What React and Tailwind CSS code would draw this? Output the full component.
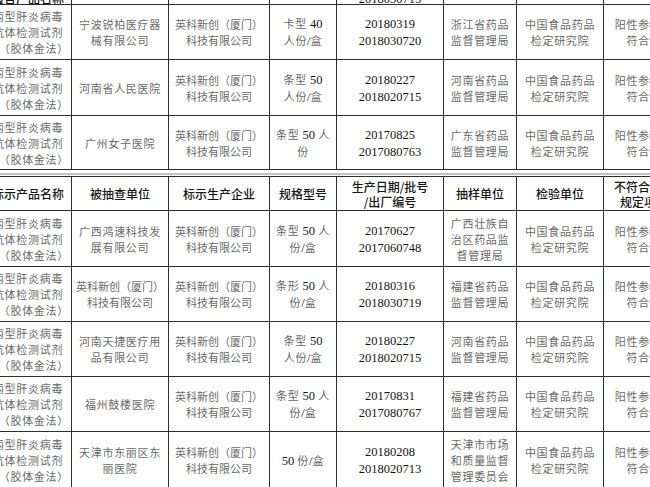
import React from "react";

const COLS = "grid-cols-[86px_96px_100px_66px_106px_72px_86px_80px]";

function Txt({ s }) {
  const parts = s.split(/([0-9A-Za-z\/ ]+)/).filter((p) => p.length);
  return (
    <>
      {parts.map((p, i) =>
        /^[0-9A-Za-z\/ ]+$/.test(p) ? (
          <span
            key={i}
            className="font-['Liberation_Serif',serif] text-[12.5px] tracking-normal text-[#151515] whitespace-pre"
          >
            {p}
          </span>
        ) : (
          <span key={i}>{p}</span>
        )
      )}
    </>
  );
}

function Cell({ lines, tight }) {
  return (
    <div className="bg-white flex flex-col items-center justify-center text-center overflow-hidden whitespace-nowrap">
      {lines.map((l, i) => (
        <div
          key={i}
          className={`leading-[16px] text-[11px] text-[#6a6a6a] font-['Noto_Sans_CJK_SC',sans-serif] ${
            tight ? "tracking-[0px]" : "tracking-[0.7px]"
          }`}
        >
          <Txt s={l} />
        </div>
      ))}
    </div>
  );
}

function Head({ lines }) {
  return (
    <div className="bg-white flex flex-col items-center justify-center text-center overflow-hidden whitespace-nowrap">
      {lines.map((l, i) => (
        <div
          key={i}
          className="leading-[15px] text-[12px] font-medium text-[#161616] font-['Noto_Sans_CJK_SC',sans-serif]"
        >
          {l}
        </div>
      ))}
    </div>
  );
}

const PROD = ["丙型肝炎病毒", "抗体检测试剂", "盒（胶体金法）"];
const MAKER = ["英科新创（厦门）", "科技有限公司"];
const LAB = ["中国食品药品", "检定研究院"];
const RES = ["阳性参考品", "符合率"];

const top = [
  [["宁波锐柏医疗器", "械有限公司"], ["卡型 40", "人份/盒"], ["20180319", "2018030720"], ["浙江省药品", "监督管理局"]],
  [["河南省人民医院"], ["条型 50", "人份/盒"], ["20180227", "2018020715"], ["河南省药品", "监督管理局"]],
  [["广州女子医院"], ["条型 50 人", "份"], ["20170825", "2017080763"], ["广东省药品", "监督管理局"]],
];

const bottom = [
  [["广西鸿速科技发", "展有限公司"], ["条型 50 人", "份/盒"], ["20170627", "2017060748"], ["广西壮族自", "治区药品监", "督管理局"]],
  [["英科新创（厦门）", "科技有限公司"], ["条形 50 人", "份/盒"], ["20180316", "2018030719"], ["福建省药品", "监督管理局"]],
  [["河南天捷医疗用", "品有限公司"], ["条型 50", "人份/盒"], ["20180227", "2018020715"], ["河南省药品", "监督管理局"]],
  [["福州鼓楼医院"], ["条型 50 人", "份/盒"], ["20170831", "2017080767"], ["福建省药品", "监督管理局"]],
  [["天津市东丽区东", "丽医院"], ["50 份/盒"], ["20180208", "2018020713"], ["天津市市场", "和质量监督", "管理委员会"]],
];

function Row({ r }) {
  return (
    <>
      <Cell lines={PROD} />
      <Cell lines={r[0]} tight={r[0][0].includes("（")} />
      <Cell lines={MAKER} tight />
      <Cell lines={r[1]} />
      <Cell lines={r[2]} />
      <Cell lines={r[3]} />
      <Cell lines={LAB} />
      <Cell lines={RES} />
    </>
  );
}

function Strip({ text, bold }) {
  return (
    <div className="bg-white overflow-hidden relative">
      {text ? (
        <div
          className={`absolute left-0 right-0 bottom-[-1px] text-center leading-[12px] whitespace-nowrap ${
            bold
              ? "text-[12px] font-medium text-[#111] font-['Noto_Sans_CJK_SC',sans-serif]"
              : "text-[12.5px] text-[#111] font-['Liberation_Serif',serif]"
          }`}
        >
          {text}
        </div>
      ) : null}
    </div>
  );
}

export default function App() {
  return (
    <div className="w-[650px] h-[487px] overflow-hidden bg-white">
      <div className="ml-[-16px] w-[760px]">
        <div className={`grid ${COLS} grid-rows-[4px_54px_55px_53px] gap-px bg-[#2e2e2e] px-px pb-px`}>
          <Strip text="报告产品名称" bold />
          <Strip />
          <Strip />
          <Strip />
          <Strip text="2018030715" />
          <Strip />
          <Strip />
          <Strip />
          {top.map((r, i) => (
            <Row key={i} r={r} />
          ))}
        </div>
        <div className="h-[3px] bg-white" />
        <div className="h-[2px] bg-[#c4c4c4]" />
        <div className="h-[1px] bg-white" />
        <div className={`grid ${COLS} grid-rows-[33px_55px_54px_54px_54px_56px] gap-px bg-[#2e2e2e] p-px`}>
          <Head lines={["标示产品名称"]} />
          <Head lines={["被抽查单位"]} />
          <Head lines={["标示生产企业"]} />
          <Head lines={["规格型号"]} />
          <Head lines={["生产日期/批号", "/出厂编号"]} />
          <Head lines={["抽样单位"]} />
          <Head lines={["检验单位"]} />
          <Head lines={["不符合标准", "规定项目"]} />
          {bottom.map((r, i) => (
            <Row key={i} r={r} />
          ))}
        </div>
      </div>
    </div>
  );
}
